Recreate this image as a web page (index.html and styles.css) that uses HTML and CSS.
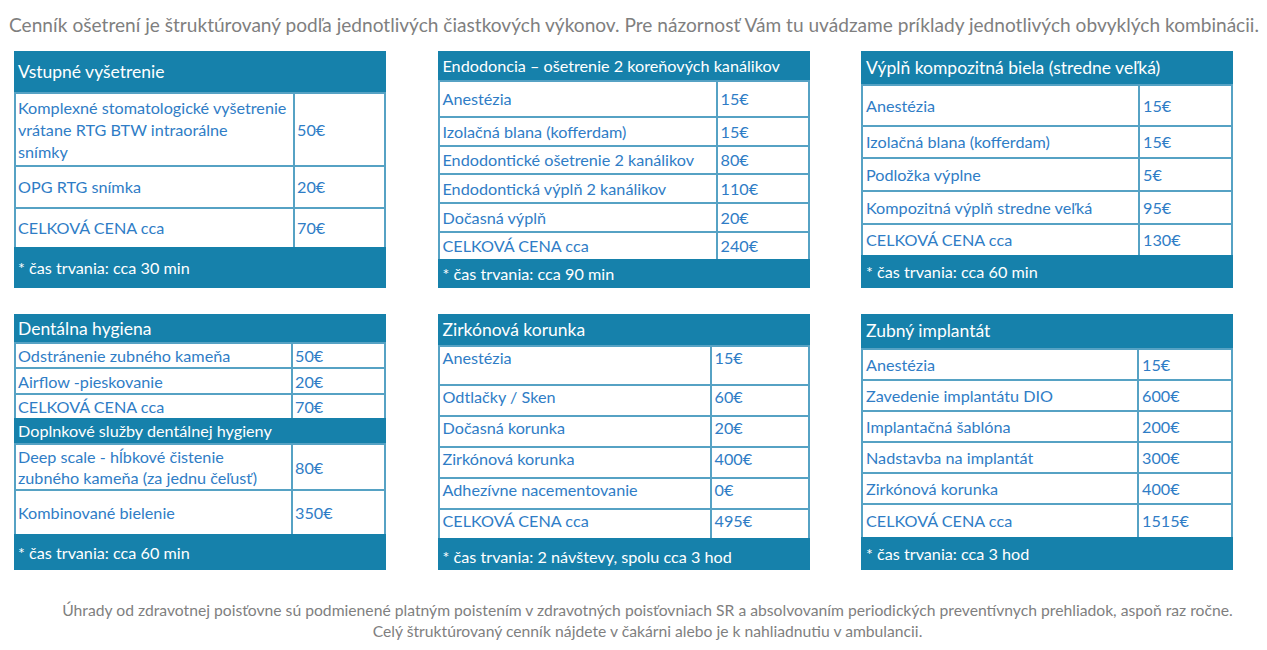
FILE: index.html
```html
<!DOCTYPE html>
<html lang="sk">
<head>
<meta charset="utf-8">
<title>Cenník</title>
<link rel="stylesheet" href="styles.css">
</head>
<body>
<p class="intro">Cenník ošetrení je štruktúrovaný podľa jednotlivých čiastkových výkonov. Pre názornosť Vám tu uvádzame príklady jednotlivých obvyklých kombinácii.</p>
<main class="grid">
  <section class="card c1">
    <div class="band big">Vstupné vyšetrenie</div>
    <div class="row"><div class="name">Komplexné stomatologické vyšetrenie<br>vrátane RTG BTW intraorálne<br>snímky</div><div class="price">50€</div></div>
    <div class="row"><div class="name">OPG RTG snímka</div><div class="price">20€</div></div>
    <div class="row"><div class="name">CELKOVÁ CENA cca</div><div class="price">70€</div></div>
    <div class="band">* čas trvania: cca 30 min</div>
  </section>
  <section class="card c2">
    <div class="band">Endodoncia – ošetrenie 2 koreňových kanálikov</div>
    <div class="row"><div class="name">Anestézia</div><div class="price">15€</div></div>
    <div class="row"><div class="name">Izolačná blana (kofferdam)</div><div class="price">15€</div></div>
    <div class="row"><div class="name">Endodontické ošetrenie 2 kanálikov</div><div class="price">80€</div></div>
    <div class="row"><div class="name">Endodontická výplň 2 kanálikov</div><div class="price">110€</div></div>
    <div class="row"><div class="name">Dočasná výplň</div><div class="price">20€</div></div>
    <div class="row"><div class="name">CELKOVÁ CENA cca</div><div class="price">240€</div></div>
    <div class="band">* čas trvania: cca 90 min</div>
  </section>
  <section class="card c3">
    <div class="band big">Výplň kompozitná biela (stredne veľká)</div>
    <div class="row"><div class="name">Anestézia</div><div class="price">15€</div></div>
    <div class="row"><div class="name">Izolačná blana (kofferdam)</div><div class="price">15€</div></div>
    <div class="row"><div class="name">Podložka výplne</div><div class="price">5€</div></div>
    <div class="row"><div class="name">Kompozitná výplň stredne veľká</div><div class="price">95€</div></div>
    <div class="row"><div class="name">CELKOVÁ CENA cca</div><div class="price">130€</div></div>
    <div class="band">* čas trvania: cca 60 min</div>
  </section>
  <section class="card c4">
    <div class="band big">Dentálna hygiena</div>
    <div class="row"><div class="name">Odstránenie zubného kameňa</div><div class="price">50€</div></div>
    <div class="row"><div class="name">Airflow -pieskovanie</div><div class="price">20€</div></div>
    <div class="row"><div class="name">CELKOVÁ CENA cca</div><div class="price">70€</div></div>
    <div class="band">Doplnkové služby dentálnej hygieny</div>
    <div class="row"><div class="name">Deep scale - hĺbkové čistenie<br>zubného kameňa (za jednu čeľusť)</div><div class="price">80€</div></div>
    <div class="row"><div class="name">Kombinované bielenie</div><div class="price">350€</div></div>
    <div class="band">* čas trvania: cca 60 min</div>
  </section>
  <section class="card c5">
    <div class="band big">Zirkónová korunka</div>
    <div class="row"><div class="name">Anestézia</div><div class="price">15€</div></div>
    <div class="row"><div class="name">Odtlačky / Sken</div><div class="price">60€</div></div>
    <div class="row"><div class="name">Dočasná korunka</div><div class="price">20€</div></div>
    <div class="row"><div class="name">Zirkónová korunka</div><div class="price">400€</div></div>
    <div class="row"><div class="name">Adhezívne nacementovanie</div><div class="price">0€</div></div>
    <div class="row"><div class="name">CELKOVÁ CENA cca</div><div class="price">495€</div></div>
    <div class="band">* čas trvania: 2 návštevy, spolu cca 3 hod</div>
  </section>
  <section class="card c6">
    <div class="band big">Zubný implantát</div>
    <div class="row"><div class="name">Anestézia</div><div class="price">15€</div></div>
    <div class="row"><div class="name">Zavedenie implantátu DIO</div><div class="price">600€</div></div>
    <div class="row"><div class="name">Implantačná šablóna</div><div class="price">200€</div></div>
    <div class="row"><div class="name">Nadstavba na implantát</div><div class="price">300€</div></div>
    <div class="row"><div class="name">Zirkónová korunka</div><div class="price">400€</div></div>
    <div class="row"><div class="name">CELKOVÁ CENA cca</div><div class="price">1515€</div></div>
    <div class="band">* čas trvania: cca 3 hod</div>
  </section>
</main>
<footer class="note">Úhrady od zdravotnej poisťovne sú podmienené platným poistením v zdravotných poisťovniach SR a absolvovaním periodických preventívnych prehliadok, aspoň raz ročne.<br>Celý štruktúrovaný cenník nájdete v čakárni alebo je k nahliadnutiu v ambulancii.</footer>
</body>
</html>
```

FILE: styles.css
```css
:root {
  --band: #1681ab;
  --line: #56a2c4;
  --ink: #2f7dc6;
  --grey: #7f7f7f;
}
* { box-sizing: border-box; }
body {
  margin: 0;
  background: #fff;
  font-family: Lato, "Noto Sans", sans-serif;
}
.intro {
  margin: 0;
  padding: 14px 0 0 9px;
  font-size: 19.1px;
  line-height: 22px;
  color: var(--grey);
  white-space: nowrap;
}
.grid {
  display: grid;
  grid-template-columns: repeat(3, 372px);
  column-gap: 51.5px;
  row-gap: 26px;
  padding-left: 14px;
  margin-top: 15px;
}
.card {
  display: grid;
  font-size: 16.2px;
  line-height: 22px;
  --split: 279px;
}
.band {
  background: var(--band);
  color: #fff;
  display: flex;
  align-items: center;
  padding-left: 4px;
  white-space: nowrap;
}
.band.big { font-size: 17.5px; }
.row {
  display: grid;
  grid-template-columns: calc(var(--split) - 2px) 1fr;
  background: #fff;
  color: var(--ink);
  border: 2px solid var(--line);
  border-bottom: 0;
}
.name, .price {
  display: flex;
  align-items: center;
  padding-left: 2px;
  white-space: nowrap;
}
.price { border-left: 2px solid var(--line); }

.c1 { --split: 279px; grid-template-rows: 41px 73px 42px 40px 41px; }
.c2 { --split: 278px; grid-template-rows: 29px 36px 29px 28px 29px 29px 28px 29px; }
.c3 { --split: 277px; grid-template-rows: 33px 41px 32px 33px 33px 32px 33px; }
.c4 { --split: 277px; grid-template-rows: 28px 25px 26px 25px 25px 46px 45px 36px; line-height: 21px; }
.c5 { --split: 272px; grid-template-rows: 31px 39px 31px 31px 31px 31px 30px 32px; }
.c6 { --split: 276px; grid-template-rows: 34px 31px 31px 31px 31px 31px 34px 33px; }

.c2 .name, .c2 .price,
.c3 .name, .c3 .price,
.c5 .name, .c5 .price,
.c6 .name, .c6 .price { padding-left: 3px; }
.c2 .band, .c3 .band, .c5 .band, .c6 .band { padding-left: 5px; }

.c5 .name, .c5 .price { align-items: flex-start; }
.c5 .band:last-child { align-items: flex-end; padding-bottom: 2px; }

.note {
  margin-top: 30px;
  padding-left: 28px;
  text-align: center;
  font-size: 15.7px;
  line-height: 21px;
  color: var(--grey);
}
```
